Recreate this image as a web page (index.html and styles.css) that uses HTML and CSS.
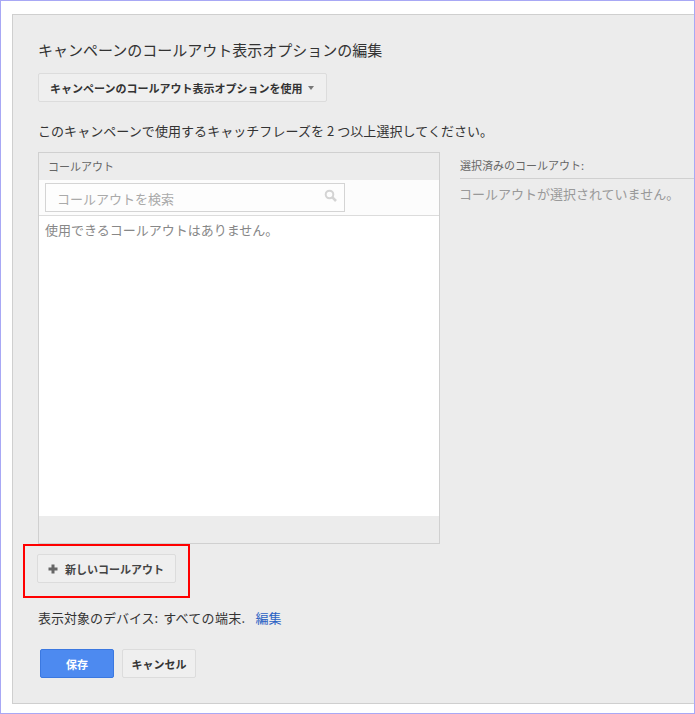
FILE: index.html
```html
<!DOCTYPE html>
<html lang="ja">
<head>
<meta charset="utf-8">
<title>コールアウト</title>
<link rel="stylesheet" href="styles.css">
</head>
<body>
<div class="frame">
  <div class="panel">
    <h1 class="title">キャンペーンのコールアウト表示オプションの編集</h1>
    <button class="btn dropdown">キャンペーンのコールアウト表示オプションを使用<span class="caret"></span></button>
    <p class="instruction">このキャンペーンで使用するキャッチフレーズを 2 つ以上選択してください。</p>
    <div class="columns">
      <div class="picker">
        <div class="picker-head">コールアウト</div>
        <div class="search-row">
          <div class="search">
            <span class="search-text">コールアウトを検索</span>
            <svg class="search-icon" width="13" height="13" viewBox="0 0 13 13"><circle cx="5.500" cy="5.500" r="3.800" fill="none" stroke="#d4d4d4" stroke-width="2"/><path d="M8.200 8.200l3.800 3.800" stroke="#d4d4d4" stroke-width="2.600"/></svg>
          </div>
        </div>
        <div class="picker-body">使用できるコールアウトはありません。</div>
        <div class="picker-foot"></div>
      </div>
      <div class="selected">
        <div class="selected-head">選択済みのコールアウト:</div>
        <div class="selected-empty">コールアウトが選択されていません。</div>
      </div>
    </div>
    <div class="new-row">
      <button class="btn new"><svg class="plus" width="10" height="10" viewBox="0 0 10 10"><path d="M3.500 0.500h3v3h3v3h-3v3h-3v-3h-3v-3h3z" fill="#666"/></svg>新しいコールアウト</button>
      <div class="highlight"></div>
    </div>
    <p class="devices">表示対象のデバイス: <span class="devices-value">すべての端末.</span><a class="edit" href="#">編集</a></p>
    <div class="actions">
      <button class="btn primary">保存</button>
      <button class="btn cancel">キャンセル</button>
    </div>
  </div>
</div>
</body>
</html>
```
FILE: styles.css
```css
* { box-sizing: border-box; }
html, body { margin: 0; padding: 0; background: #fff; }
body { font-family: "Noto Sans CJK JP", "Liberation Sans", sans-serif; color: #333; }
.frame {
  width: 695px; height: 714px;
  border: 1px solid #a8a8f5;
  padding: 13px 0 9px 11px;
}
.panel {
  height: 690px;
  background: #ececec;
  border: 1px solid #cfcfcf;
  border-right: 0;
  padding: 24px 0 0 25px;
}
.title { margin: 0; font-size: 15px; font-weight: 400; line-height: 22px; color: #333; }
.btn {
  display: inline-flex; align-items: center; justify-content: center;
  font-family: inherit; font-size: 11px; font-weight: 700; color: #333;
  height: 29px; padding: 0;
  background: #efefef;
  border: 1px solid #dcdcdc; border-radius: 2px;
}
.dropdown { width: 289px; margin-top: 12px; padding-left: 11px; justify-content: flex-start; }
.caret {
  margin-left: 6px; margin-top: 1px; width: 0; height: 0;
  border-left: 3.500px solid transparent; border-right: 3.500px solid transparent;
  border-top: 4px solid #777;
}
.instruction { margin: 19px 0 0; font-size: 13px; line-height: 20px; color: #333; letter-spacing: 0.06px; }
.columns { display: flex; margin-top: 11px; }
.picker {
  width: 402px; height: 392px;
  border: 1px solid #d0d0d0;
  display: flex; flex-direction: column;
}
.picker-head { height: 27px; padding-left: 9px; font-size: 11px; line-height: 26px; color: #666; }
.search-row { height: 36px; padding: 3px 0 0 6px; background: #fcfcfc; border-bottom: 1px solid #dcdcdc; }
.search {
  width: 300px; height: 29px;
  border: 1px solid #d4d4d4; background: #fdfdfd;
  display: flex; align-items: center; justify-content: space-between;
  padding: 0 7px 0 11px;
}
.search-text { font-size: 13px; color: #aaa; padding-top: 2px; }
.search-icon { margin-top: -4px; }
.picker-body { flex: 1; background: #fff; padding: 5px 0 0 6px; font-size: 13px; line-height: 18px; color: #888; }
.picker-foot { height: 27px; }
.selected { flex: 1; margin-left: 20px; }
.selected-head { height: 27px; font-size: 11px; line-height: 26px; color: #666; border-bottom: 1px solid #d0d0d0; }
.selected-empty { margin-top: 5px; font-size: 13px; line-height: 20px; color: #999; margin-left: -1px; }
.new-row { position: relative; margin-top: 10px; margin-left: -1px; height: 29px; }
.new { width: 139px; color: #444; }
.plus { margin-right: 7px; margin-left: -1px; }
.highlight {
  position: absolute; left: -14px; top: -10px;
  width: 167px; height: 54px;
  border: 2px solid #f00;
}
.devices { margin: 25px 0 0; font-size: 13px; line-height: 20px; color: #333; }
.devices-value { margin-left: 2px; letter-spacing: 0.3px; }
.edit { margin-left: 10px; color: #2a62c4; text-decoration: none; }
.actions { display: flex; gap: 8px; margin-top: 21px; margin-left: 2px; }
.primary { width: 74px; color: #fff; background: #4d8af0; border-color: #3b78e0; }
.cancel { width: 74px; }
```
